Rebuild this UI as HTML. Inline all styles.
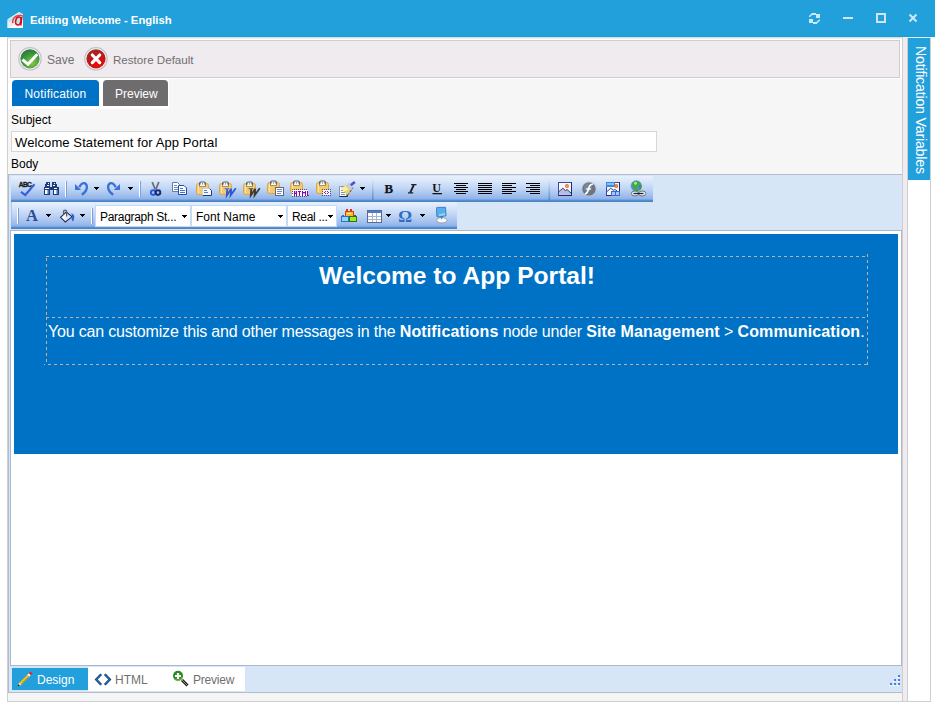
<!DOCTYPE html>
<html><head><meta charset="utf-8">
<style>
*{margin:0;padding:0;box-sizing:border-box}
html,body{width:935px;height:707px;overflow:hidden;background:#fff;font-family:"Liberation Sans",sans-serif;position:relative}
.a{position:absolute}
.t{position:absolute;white-space:nowrap;line-height:1}
.tb{position:absolute;background:linear-gradient(#e6f0fc 0px,#dde9fb 4px,#c2d7f5 12px,#a3c1ee 19px,#90b2e8 23px,#6098da 24px,#4a84c4 25px)}
.sepw{position:absolute;width:1px;background:#fff}
.sepb{position:absolute;width:1px;background:#7b9fe0}
.dd{position:absolute;width:0;height:0;border-left:3px solid transparent;border-right:3px solid transparent;border-top:3px solid #000}
.sel{position:absolute;background:#fff;font-size:12px;line-height:1;white-space:nowrap}
#para b{letter-spacing:0.14px}
</style></head><body>

<!-- title bar -->
<div class="a" style="left:0;top:0;width:935px;height:37px;background:#22a0dc"></div>
<div class="a" style="left:0;top:36px;width:935px;height:1px;background:#139fe0"></div>
<div class="t" id="ttl" style="left:30px;top:15px;font-size:11.3px;font-weight:bold;color:#fff">Editing Welcome - English</div>

<!-- outer container -->
<div class="a" style="left:7px;top:37px;width:896px;height:665px;background:#f6f6f6;border:1px solid #cfcfcf;border-top-color:#e0dad6"></div>
<div class="a" style="left:8px;top:38px;width:894px;height:41px;background:#fff;border-top:1px solid #f3f1ef"></div>
<!-- top toolbar -->
<div class="a" style="left:10px;top:40px;width:890px;height:38px;background:#efebee;border:1px solid #cdcdcd"></div>
<div class="t" id="save" style="left:47px;top:54px;font-size:12px;color:#707070">Save</div>
<div class="t" id="restore" style="left:113px;top:54px;font-size:11.6px;color:#707070">Restore Default</div>

<!-- tabs -->
<div class="a" style="left:8px;top:78px;width:161px;height:31px;background:#fff"></div>
<div class="a" style="left:12px;top:80px;width:87px;height:26px;background:#0072c6;border-radius:4px 4px 0 0"></div>
<div class="a" style="left:103px;top:80px;width:65px;height:26px;background:#6f6c6e;border-radius:4px 4px 0 0"></div>
<div class="t" id="tnot" style="left:24.5px;top:88px;font-size:12px;letter-spacing:0.2px;color:#fff">Notification</div>
<div class="t" id="tprev" style="left:115px;top:88px;font-size:12px;color:#fff">Preview</div>

<div class="t" id="subj" style="left:11px;top:114px;font-size:12px;color:#000">Subject</div>
<div class="a" style="left:11px;top:131px;width:646px;height:21px;background:#fff;border:1px solid #d6d6d6"></div>
<div class="t" id="subjv" style="left:15px;top:136px;font-size:13px;letter-spacing:0.1px;color:#000">Welcome Statement for App Portal</div>
<div class="t" id="body" style="left:11px;top:158px;font-size:12px;color:#000">Body</div>

<!-- editor wrapper -->
<div class="a" style="left:8px;top:174px;width:895px;height:519px;background:#d6e6f6;border:1px solid #b1bccd;border-right:none"></div>
<!-- toolbar 1 -->
<div class="tb" style="left:11px;top:176px;width:642px;height:26px"></div>
<!-- toolbar 2 -->
<div class="tb" style="left:11px;top:202px;width:446px;height:27px;background:linear-gradient(#e6f0fc 0px,#dde9fb 4px,#c2d7f5 12px,#a3c1ee 20px,#90b2e8 24px,#6098da 25px,#4a84c4 26px)"></div>


<div class="a" style="left:95px;top:205px;width:242px;height:22px;background:#c4dafa"></div>
<div class="sel" style="left:96px;top:206px;width:94px;height:20px"></div>
<div class="sel" style="left:192px;top:206px;width:94px;height:20px"></div>
<div class="sel" style="left:288px;top:206px;width:48px;height:20px"></div>
<div class="t" id="ps" style="left:100px;top:211px;font-size:12px;letter-spacing:-0.3px;color:#000">Paragraph St...</div>
<div class="t" id="fn" style="left:196px;top:211px;font-size:12px;color:#000">Font Name</div>
<div class="t" id="rl" style="left:292px;top:211px;font-size:12px;letter-spacing:-0.3px;color:#000">Real ...</div>
<!-- editor area -->
<div class="a" style="left:10px;top:230px;width:892px;height:436px;background:#fff;border:1px solid #a9b8cc"></div>
<div class="a" style="left:14px;top:234px;width:884px;height:220px;background:#0072c6"></div>


<div class="t" id="h1" style="left:319px;top:264px;font-size:24.6px;font-weight:bold;color:#fff">Welcome to App Portal!</div>
<div class="t" id="para" style="left:48px;top:324px;font-size:16px;letter-spacing:-0.18px;color:#fff">You can customize this and other messages in the <b>Notifications</b> node under <b>Site Management</b> &gt; <b>Communication</b>.</div>
<!-- bottom bar -->
<div class="a" style="left:8px;top:692px;width:895px;height:1px;background:#b1bccd"></div>
<div class="a" style="left:8px;top:693px;width:894px;height:8px;background:#f5f5f5"></div>
<div class="a" style="left:88px;top:667px;width:157px;height:24px;background:#fff"></div>
<div class="a" style="left:12px;top:668px;width:76px;height:22px;background:#22a0dc"></div>
<div class="t" id="design" style="left:37px;top:674px;font-size:12px;color:#fff">Design</div>
<div class="t" id="html" style="left:115px;top:674px;font-size:12px;color:#707070">HTML</div>
<div class="t" id="bprev" style="left:193px;top:674px;font-size:12px;letter-spacing:-0.2px;color:#707070">Preview</div>

<!-- splitter + right panel -->
<div class="a" style="left:902px;top:37px;width:1px;height:665px;background:#cfcfcf"></div>
<div class="a" style="left:903px;top:37px;width:4px;height:664px;background:#efebee"></div>
<div class="a" style="left:907px;top:37px;width:24px;height:1px;background:#efebee"></div>
<div class="a" style="left:7px;top:701px;width:924px;height:1px;background:#cfcfcf"></div>
<div class="a" style="left:907px;top:38px;width:24px;height:664px;background:#fff;border:1px solid #cfcfcf;border-top:none"></div>
<div class="a" style="left:908px;top:38px;width:22px;height:142px;background:#22a0dc"></div>



<div class="t" id="nv" style="left:913.5px;top:46px;font-size:14.2px;letter-spacing:-0.2px;color:#fff;writing-mode:vertical-rl">Notification Variables</div>
<svg class="a" style="left:0;top:0" width="935" height="707" viewBox="0 0 935 707">
<defs>
<radialGradient id="gG" cx="0.6" cy="0.7" r="0.7"><stop offset="0" stop-color="#8cc84a"/><stop offset="0.6" stop-color="#3e9a3a"/><stop offset="1" stop-color="#2a7a3c"/></radialGradient>
<radialGradient id="gR" cx="0.6" cy="0.75" r="0.7"><stop offset="0" stop-color="#f00a0a"/><stop offset="0.6" stop-color="#c81414"/><stop offset="1" stop-color="#a02828"/></radialGradient>
<linearGradient id="gSep" x1="0" y1="178" x2="0" y2="201" gradientUnits="userSpaceOnUse"><stop offset="0" stop-color="#e4eefa"/><stop offset="0.4" stop-color="#a8c8e8"/><stop offset="1" stop-color="#4886c6"/></linearGradient>
</defs>
<!-- title icon -->
<g>
<path d="M7.5 19.3 L19 12 L23 14.3 L23 28 L7.5 28 Z" fill="#fbfbfb"/>
<path d="M8 19.6 L19 12.7 L22.6 14.8 L22.6 19 L13.5 23.2 L8 21.5 Z" fill="#c4e4f8"/>
<path d="M7.6 21.3 L14.5 25 L7.6 27.5 Z" fill="#ececec"/>
<path d="M14.5 25 L22.8 22" stroke="#e0e0e0" stroke-width="0.8"/>
<path d="M12.6 23.2 Q12.4 16.2 19.2 15.4 Q22 15.2 23 16.5" fill="none" stroke="#f23a3a" stroke-width="1.4"/>
<ellipse cx="18.3" cy="21" rx="2.6" ry="4" transform="rotate(12 18.3 21)" fill="#bfe0f6" stroke="#dc0c0c" stroke-width="1.5"/>
<path d="M21.8 17.2 L20.8 25.5" stroke="#d40808" stroke-width="1.5"/>
</g>
<!-- window buttons -->
<g fill="#cfe7f6" shape-rendering="crispEdges">
<rect x="816" y="14" width="4" height="4"/>
<rect x="812" y="13" width="4" height="2"/>
<rect x="809" y="19" width="4" height="4"/>
<rect x="813" y="22" width="4" height="2"/>
<rect x="843" y="17" width="10" height="2"/>
<path d="M876 13h10v10h-10z M878 15v6h6v-6z" fill-rule="evenodd"/>
</g>
<g stroke="#cfe7f6" fill="none">
<path d="M809.3 16.7 L812.5 13.5" stroke-width="1.6"/>
<path d="M816.5 23 L819.8 19.8" stroke-width="1.6"/>
<path d="M909.5 14.5 L916.5 21.5 M916.5 14.5 L909.5 21.5" stroke-width="2"/>
</g>
<!-- save icon -->
<circle cx="30" cy="58.8" r="11.2" fill="#f4f2f4" stroke="#c4c0c6" stroke-width="1.2"/>
<circle cx="30" cy="58.8" r="9.6" fill="url(#gG)"/>
<path d="M23.5 60.5 L28 64.3 L36.3 55.3" fill="none" stroke="#fff" stroke-width="3" stroke-linecap="square"/>
<!-- restore icon -->
<circle cx="96" cy="58.8" r="11.2" fill="#f4f2f4" stroke="#c4c0c6" stroke-width="1.2"/>
<circle cx="96" cy="58.8" r="9.6" fill="url(#gR)"/>
<path d="M92.3 55 L99.7 62.6 M99.7 55 L92.3 62.6" fill="none" stroke="#fff" stroke-width="3.2" stroke-linecap="round"/>


<!-- dashed table -->
<g stroke="#c0b0a6" stroke-width="1" stroke-dasharray="3 3" fill="none">
<line x1="46" y1="256.5" x2="868" y2="256.5"/>
<line x1="46" y1="317.5" x2="866" y2="317.5"/>
<line x1="46.5" y1="258" x2="46.5" y2="315"/>
<line x1="46.5" y1="317" x2="46.5" y2="362"/>
<line x1="867.5" y1="254" x2="867.5" y2="365"/>
<line x1="44" y1="364.5" x2="868" y2="364.5" stroke-dashoffset="2"/>
</g>
<!-- pencil -->
<path d="M20 684 L28.6 675.4" stroke="#f4c020" stroke-width="2.7"/>
<path d="M21 684.4 L29 676.4" stroke="#d88800" stroke-width="1"/>
<path d="M28.4 675.6 L29.9 674.1" stroke="#fff" stroke-width="2.7"/>
<path d="M29.7 674.3 L31.6 672.4" stroke="#e82828" stroke-width="2.7"/>
<path d="M18.6 685.4 L20.4 683.6" stroke="#fce4b8" stroke-width="2.5"/>
<circle cx="18.7" cy="685.3" r="0.9" fill="#2a1400"/>
<!-- <> -->
<path d="M101.2 674.3 L96.2 679.5 L101.2 684.7" fill="none" stroke="#0c3470" stroke-width="2.3"/>
<path d="M101.2 674.3 L96.2 679.5 L101.2 684.7" fill="none" stroke="#2a98e8" stroke-width="0.9"/>
<path d="M104.8 674.3 L109.8 679.5 L104.8 684.7" fill="none" stroke="#0c3470" stroke-width="2.3"/>
<path d="M104.8 674.3 L109.8 679.5 L104.8 684.7" fill="none" stroke="#2a98e8" stroke-width="0.9"/>
<!-- magnifier -->
<path d="M182 680 L187.5 685.5" stroke="#202020" stroke-width="3"/>
<path d="M182 680 L187 685" stroke="#909090" stroke-width="1"/>
<circle cx="178" cy="675.8" r="5" fill="#2a8a2a"/>
<path d="M174.5 679 A5 5 0 0 0 182.5 677" fill="none" stroke="#70b830" stroke-width="1.5"/>
<path d="M175 676h6M178 673v6" stroke="#fff" stroke-width="2.2"/>
<!-- resize grip -->
<g fill="#4a7ee0">
<rect x="898" y="675" width="2" height="2"/>
<rect x="894" y="679" width="2" height="2"/><rect x="898" y="679" width="2" height="2"/>
<rect x="890" y="683" width="2" height="2"/><rect x="894" y="683" width="2" height="2"/><rect x="898" y="683" width="2" height="2"/>
</g>
<g fill="#fff">
<rect x="897" y="677" width="2" height="1"/>
<rect x="893" y="681" width="2" height="1"/><rect x="897" y="681" width="2" height="1"/>
<rect x="889" y="685" width="2" height="1"/><rect x="893" y="685" width="2" height="1"/><rect x="897" y="685" width="2" height="1"/>
</g>
<!-- ============ TOOLBAR 1 ICONS ============ -->
<g id="tb1">
<!-- spell ABC -->
<text x="18.8" y="187" font-family="Liberation Sans" font-weight="bold" font-size="6.6" fill="#1a1a1a" stroke="#1a1a1a" stroke-width="0.35" letter-spacing="-0.6">ABC</text>
<path d="M21 191.8 L25.3 195 L34.5 184.3" fill="none" stroke="#3a5ed8" stroke-width="2.1"/>
<!-- binoculars -->
<g fill="#1c3a7c" shape-rendering="crispEdges">
<rect x="46" y="182" width="4" height="5"/><rect x="45" y="184" width="1" height="3"/>
<rect x="44" y="187" width="6" height="8"/>
<rect x="52" y="182" width="4" height="5"/><rect x="56" y="184" width="1" height="3"/>
<rect x="53" y="187" width="6" height="8"/>
<rect x="50" y="187" width="3" height="3"/>
</g>
<g fill="#fff" shape-rendering="crispEdges">
<rect x="48" y="183" width="1" height="1"/><rect x="54" y="183" width="1" height="1"/>
<rect x="47" y="185" width="2" height="1"/><rect x="53" y="185" width="2" height="1"/>
<rect x="45" y="188" width="4" height="1"/><rect x="54" y="188" width="3" height="1"/>
<rect x="45" y="190" width="2" height="4"/><rect x="54" y="190" width="2" height="4"/>
</g>
<g fill="#9aa8dc" shape-rendering="crispEdges"><rect x="47" y="190" width="1" height="4"/><rect x="56" y="190" width="1" height="4"/></g>
<g fill="#5a6ab8" shape-rendering="crispEdges"><rect x="48" y="190" width="1" height="4"/><rect x="57" y="190" width="1" height="4"/></g>
<!-- separator -->
<rect x="65" y="181" width="1" height="16" fill="#fff"/><rect x="66" y="181" width="1" height="16" fill="#7b9fe0"/>
<!-- undo -->
<path d="M79.3 187.3 Q81.3 182.8 84.6 183.2 Q87.3 184.2 86.8 188.2 Q86 192 81.8 194.8" fill="none" stroke="#3a70d8" stroke-width="2.3"/>
<path d="M75 184 L75 190 L81.2 190 Z" fill="#3a70d8"/>
<path d="M94 187h5v1h-1v1h-1v1h-1v-1h-1v-1h-1z" fill="#000"/>
<!-- redo -->
<path d="M115.7 187.3 Q113.7 182.8 110.4 183.2 Q107.7 184.2 108.2 188.2 Q109 192 113.2 194.8" fill="none" stroke="#3a70d8" stroke-width="2.3"/>
<path d="M120 184 L120 190 L113.8 190 Z" fill="#3a70d8"/>
<path d="M128 187h5v1h-1v1h-1v1h-1v-1h-1v-1h-1z" fill="#000"/>
<!-- separator -->
<rect x="139" y="181" width="1" height="16" fill="#fff"/><rect x="140" y="181" width="1" height="16" fill="#7b9fe0"/>
<!-- cut -->
<path d="M152.2 182 L155.2 189.5 M158.8 182 L155.8 189.5" stroke="#6a7078" stroke-width="1.8"/>
<circle cx="153.2" cy="192.6" r="2.3" fill="none" stroke="#2a5ae0" stroke-width="2"/>
<circle cx="158" cy="192.6" r="2.3" fill="none" stroke="#1a2a78" stroke-width="2"/>
<!-- copy -->
<path d="M172.5 182.5h5l2 2v7h-7z" fill="#fff" stroke="#6a7a9a"/>
<path d="M174 185.5h3M174 187.5h4M174 189.5h4" stroke="#5a8ae0"/>
<path d="M178.5 185.5h5.5l2.5 2.5v6.5h-8z" fill="#fff" stroke="#2a48a8"/>
<path d="M180 188.5h3M180 190.5h5M180 192.5h5" stroke="#3a72e0"/>
<!-- paste -->
<g id="clip">
<rect x="196.5" y="183.5" width="12" height="11" rx="2" fill="#f6c96a" stroke="#dca650"/>
<rect x="198" y="185" width="1" height="8" fill="#fde6a8"/>
<path d="M199 186.5 V183.5 Q199 181.5 201 181.5 H204 Q206 181.5 206 183.5 V186.5 Z" fill="#585e64"/>
<path d="M199.8 186 H205.2 V184.6 H204.4 V182.6 H200.6 V184.6 H199.8 Z" fill="#f6f6f2"/>
<circle cx="202.5" cy="183.8" r="0.6" fill="#6a5a3a"/>
</g>
<path d="M202.5 188.5h7l2 2v5h-9z" fill="#f8f8fc" stroke="#24406a"/>
<path d="M202.5 195.5v-7h7" fill="none" stroke="#c8d4e8"/>
<path d="M204 190.5h3M204 192.5h4" stroke="#4a80d8"/>
<!-- paste word -->
<g transform="translate(23,0)">
<rect x="196.5" y="183.5" width="12" height="11" rx="2" fill="#f6c96a" stroke="#dca650"/>
<rect x="198" y="185" width="1" height="8" fill="#fde6a8"/>
<path d="M199 186.5 V183.5 Q199 181.5 201 181.5 H204 Q206 181.5 206 183.5 V186.5 Z" fill="#585e64"/>
<path d="M199.8 186 H205.2 V184.6 H204.4 V182.6 H200.6 V184.6 H199.8 Z" fill="#f6f6f2"/>
<circle cx="202.5" cy="183.8" r="0.6" fill="#6a5a3a"/>
</g>
<path d="M227.2 188.6 L226.8 195.4 L231.2 188.8 L230.6 195.4 L235.8 188.2" fill="none" stroke="#2c58d8" stroke-width="1.8"/>
<path d="M224.6 188.7h4.6" stroke="#5a80e0" stroke-width="1.3"/>
<!-- paste word strip -->
<g transform="translate(47,0)">
<rect x="196.5" y="183.5" width="12" height="11" rx="2" fill="#f6c96a" stroke="#dca650"/>
<rect x="198" y="185" width="1" height="8" fill="#fde6a8"/>
<path d="M199 186.5 V183.5 Q199 181.5 201 181.5 H204 Q206 181.5 206 183.5 V186.5 Z" fill="#585e64"/>
<path d="M199.8 186 H205.2 V184.6 H204.4 V182.6 H200.6 V184.6 H199.8 Z" fill="#f6f6f2"/>
<circle cx="202.5" cy="183.8" r="0.6" fill="#6a5a3a"/>
</g>
<path d="M251.2 188.6 L250.8 195.4 L255.2 188.8 L254.6 195.4 L259.8 188.2" fill="none" stroke="#3a3a3a" stroke-width="1.8"/>
<path d="M248.6 188.7h4.6" stroke="#6a6a6a" stroke-width="1.3"/>
<!-- paste plain -->
<g transform="translate(71,-1)">
<rect x="196.5" y="183.5" width="12" height="11" rx="2" fill="#f6c96a" stroke="#dca650"/>
<rect x="198" y="185" width="1" height="8" fill="#fde6a8"/>
<path d="M199 186.5 V183.5 Q199 181.5 201 181.5 H204 Q206 181.5 206 183.5 V186.5 Z" fill="#585e64"/>
<path d="M199.8 186 H205.2 V184.6 H204.4 V182.6 H200.6 V184.6 H199.8 Z" fill="#f6f6f2"/>
<circle cx="202.5" cy="183.8" r="0.6" fill="#6a5a3a"/>
</g>
<rect x="275.5" y="187.5" width="8" height="8" fill="#fff" stroke="#5a6a7a"/>
<path d="M277 189.5h5M277 191.5h5M277 193.5h4" stroke="#6a88c0"/>
<!-- paste html -->
<g transform="translate(94,-1)">
<rect x="196.5" y="183.5" width="12" height="11" rx="2" fill="#f6c96a" stroke="#dca650"/>
<rect x="198" y="185" width="1" height="8" fill="#fde6a8"/>
<path d="M199 186.5 V183.5 Q199 181.5 201 181.5 H204 Q206 181.5 206 183.5 V186.5 Z" fill="#585e64"/>
<path d="M199.8 186 H205.2 V184.6 H204.4 V182.6 H200.6 V184.6 H199.8 Z" fill="#f6f6f2"/>
<circle cx="202.5" cy="183.8" r="0.6" fill="#6a5a3a"/>
</g>
<rect x="292" y="190" width="16" height="6" fill="#f4faff"/>
<g fill="#505868"><rect x="292" y="189" width="1" height="1"/><rect x="294" y="189" width="1" height="1"/><rect x="296" y="189" width="1" height="1"/><rect x="298" y="189" width="1" height="1"/><rect x="300" y="189" width="1" height="1"/><rect x="302" y="189" width="1" height="1"/><rect x="304" y="189" width="1" height="1"/><rect x="306" y="189" width="1" height="1"/>
<rect x="292" y="196" width="1" height="1"/><rect x="294" y="196" width="1" height="1"/><rect x="296" y="196" width="1" height="1"/><rect x="298" y="196" width="1" height="1"/><rect x="300" y="196" width="1" height="1"/><rect x="302" y="196" width="1" height="1"/><rect x="304" y="196" width="1" height="1"/><rect x="306" y="196" width="1" height="1"/>
<rect x="292" y="191" width="1" height="1"/><rect x="292" y="193" width="1" height="1"/></g>
<g fill="#8a0a9e" shape-rendering="crispEdges">
<rect x="294" y="191" width="1" height="5"/><rect x="296" y="191" width="1" height="5"/><rect x="295" y="193" width="1" height="1"/>
<rect x="298" y="191" width="3" height="1"/><rect x="299" y="192" width="1" height="4"/>
<rect x="302" y="191" width="1" height="5"/><rect x="305" y="191" width="1" height="5"/><rect x="303" y="192" width="2" height="1"/>
<rect x="307" y="191" width="1" height="5"/><rect x="308" y="195" width="1" height="1"/>
</g>
<g fill="#c070d0" opacity="0.6"><rect x="295" y="191" width="1" height="2"/><rect x="303" y="193" width="2" height="1"/></g>
<!-- paste code -->
<g transform="translate(120,-1)">
<rect x="196.5" y="183.5" width="12" height="11" rx="2" fill="#f6c96a" stroke="#dca650"/>
<rect x="198" y="185" width="1" height="8" fill="#fde6a8"/>
<path d="M199 186.5 V183.5 Q199 181.5 201 181.5 H204 Q206 181.5 206 183.5 V186.5 Z" fill="#585e64"/>
<path d="M199.8 186 H205.2 V184.6 H204.4 V182.6 H200.6 V184.6 H199.8 Z" fill="#f6f6f2"/>
<circle cx="202.5" cy="183.8" r="0.6" fill="#6a5a3a"/>
</g>
<rect x="323" y="190" width="7" height="5" fill="#f4faff"/>
<g fill="#505868"><rect x="322" y="189" width="1" height="1"/><rect x="324" y="189" width="1" height="1"/><rect x="326" y="189" width="1" height="1"/><rect x="328" y="189" width="1" height="1"/><rect x="330" y="189" width="1" height="1"/>
<rect x="322" y="191" width="1" height="1"/><rect x="330" y="191" width="1" height="1"/><rect x="322" y="193" width="1" height="1"/><rect x="330" y="193" width="1" height="1"/>
<rect x="322" y="195" width="1" height="1"/><rect x="324" y="195" width="1" height="1"/><rect x="326" y="195" width="1" height="1"/><rect x="328" y="195" width="1" height="1"/><rect x="330" y="195" width="1" height="1"/></g>
<g fill="#a010b0"><rect x="325" y="191" width="1" height="1"/><rect x="324" y="192" width="1" height="1"/><rect x="325" y="193" width="1" height="1"/>
<rect x="327" y="191" width="1" height="1"/><rect x="328" y="192" width="1" height="1"/><rect x="327" y="193" width="1" height="1"/></g>
<!-- format stripper -->
<path d="M339.5 186.5h7v10h-7z" fill="#fbfbfe" stroke="#8a94a8"/>
<path d="M339.5 196.5h8v-6" fill="none" stroke="#1a2a58"/>
<path d="M341 190.5h4M341 192.5h4M341 194.5h4" stroke="#7a90c0"/>
<path d="M340.8 188.2 L345.8 185.2 L350.8 190.8 L347.6 195.2 Z" fill="#f0d060"/>
<path d="M341.5 188.4 L345.6 186 L348.5 189.5 L343.5 192 Z" fill="#fff4b0" opacity="0.8"/>
<path d="M347.6 195.2 L350.8 190.8" stroke="#202020" stroke-width="1" stroke-dasharray="1 1"/>
<path d="M345.8 185.2 L349.3 182.8 L353.2 187.2 L350.8 190.8 Z" fill="#c8ccd8"/>
<path d="M350.8 190.8 L353.2 187.2" stroke="#303030" stroke-width="1" stroke-dasharray="1 1"/>
<path d="M350.8 185.2 L354.8 182" stroke="#4a50c8" stroke-width="2.6"/>
<path d="M360 187h5v1h-1v1h-1v1h-1v-1h-1v-1h-1z" fill="#000"/>
<!-- group boundary -->
<rect x="372" y="178" width="1.6" height="23" fill="url(#gSep)"/>
<!-- B I U -->
<text x="384.5" y="193.4" font-family="Liberation Serif" font-weight="bold" font-size="12.8" fill="#141414" stroke="#141414" stroke-width="0.25">B</text>
<path d="M413.8 185 L410.2 192.6" stroke="#202020" stroke-width="1.9"/>
<path d="M411.2 184.6h5.3M408 192.9h5.2" stroke="#202020" stroke-width="1.1"/>
<text x="432.3" y="192.2" font-family="Liberation Serif" font-weight="bold" font-size="12" fill="#141414">U</text>
<rect x="432.5" y="193" width="9.5" height="1.3" fill="#141414"/>
<!-- align icons -->
<g fill="#000" shape-rendering="crispEdges">
<rect x="454" y="183" width="14" height="1"/><rect x="456" y="185" width="10" height="1"/><rect x="454" y="187" width="14" height="1"/><rect x="456" y="189" width="10" height="1"/><rect x="454" y="191" width="14" height="1"/><rect x="456" y="193" width="10" height="1"/>
<rect x="478" y="183" width="14" height="1"/><rect x="478" y="185" width="14" height="1"/><rect x="478" y="187" width="14" height="1"/><rect x="478" y="189" width="14" height="1"/><rect x="478" y="191" width="14" height="1"/><rect x="478" y="193" width="14" height="1"/>
<rect x="502" y="183" width="14" height="1"/><rect x="502" y="185" width="10" height="1"/><rect x="502" y="187" width="14" height="1"/><rect x="502" y="189" width="10" height="1"/><rect x="502" y="191" width="14" height="1"/><rect x="502" y="193" width="10" height="1"/>
<rect x="526" y="183" width="14" height="1"/><rect x="530" y="185" width="10" height="1"/><rect x="526" y="187" width="14" height="1"/><rect x="530" y="189" width="10" height="1"/><rect x="526" y="191" width="14" height="1"/><rect x="530" y="193" width="10" height="1"/>
</g>
<rect x="548.5" y="178" width="1.6" height="23" fill="url(#gSep)"/>
<!-- image -->
<rect x="558.5" y="182.5" width="13" height="13" fill="#f6f8fe" stroke="#3a4a98"/>
<path d="M571.5 182.5v13h-13" fill="none" stroke="#1a2a78"/>
<path d="M559 194.8 L559 191.5 L562.8 188.2 L565.5 190.3 L567 189.3 L571 193 L571 195 Z" fill="#b8bce0"/>
<path d="M559 191.5 L562.8 188.2 L565.5 190.6 L567 189.5 L571 193" fill="none" stroke="#2a3050" stroke-width="0.9"/>
<circle cx="567" cy="186" r="1.9" fill="#f06818"/>
<circle cx="567" cy="186" r="0.8" fill="#ffd060"/>
<!-- flash -->
<circle cx="589" cy="189" r="7.6" fill="#b8c0cc"/>
<circle cx="589" cy="189" r="6.6" fill="#6a7688"/>
<circle cx="588" cy="187.5" r="4" fill="#8a96a6" opacity="0.5"/>
<path d="M584.8 194 Q587.5 193.5 588.5 189 Q589.5 184.3 593.2 184" fill="none" stroke="#fff" stroke-width="1.7"/>
<path d="M586.2 189h4.6" stroke="#fff" stroke-width="1.5"/>
<!-- image map -->
<rect x="606.5" y="182.5" width="13" height="13" fill="#f6f8fe" stroke="#3a4a98"/>
<path d="M619.5 182.5v13h-13" fill="none" stroke="#1a2a78"/>
<circle cx="616.3" cy="186" r="1.9" fill="#f06818"/>
<circle cx="616.3" cy="186" r="0.8" fill="#ffc050"/>
<rect x="606" y="182" width="9" height="5" fill="#3a88e0"/>
<rect x="607" y="183" width="7" height="2" fill="#88c0f0"/>
<path d="M607 191.5 L610.8 188.2 L613.3 190.3 L614.8 189.5 L617 190.8" fill="none" stroke="#2a3050" stroke-width="0.9"/>
<rect x="611" y="191" width="9" height="5" fill="#3a68d8"/>
<rect x="612" y="192" width="3" height="3" fill="#a8c8f0"/><rect x="616" y="192" width="3" height="3" fill="#a8c8f0"/>
<!-- link -->
<circle cx="636.3" cy="186" r="5.4" fill="#5a8ae0" stroke="#8a94a8" stroke-width="0.5"/>
<path d="M632 183 Q634.5 180.5 638.5 181.5 L640.8 184 L638 184.5 L636.5 188 L639.5 190.5 L637.5 191.2 L634.2 189 L632.5 186.5 Z" fill="#38b030"/>
<path d="M638.5 185.5 L641.6 184.8 Q642 188.5 640 190 Z" fill="#30a030"/>
<circle cx="635.5" cy="183.3" r="1.5" fill="#c8f0c0" opacity="0.8"/>
<ellipse cx="635" cy="193.5" rx="3.6" ry="2.5" fill="#f4f4f8" stroke="#5a6070" stroke-width="0.9"/>
<ellipse cx="642.2" cy="193.5" rx="3.6" ry="2.5" fill="#f4f4f8" stroke="#5a6070" stroke-width="0.9"/>
<path d="M633.5 193.5h10" stroke="#1a2240" stroke-width="1.3"/>
</g>
<!-- ============ TOOLBAR 2 ICONS ============ -->
<g id="tb2">
<rect x="11" y="202" width="1" height="25" fill="#8ab0e4" opacity="0.5"/>
<rect x="17" y="208" width="1" height="16" fill="#fff"/><rect x="18" y="208" width="1" height="16" fill="#7b9fe0"/>
<text x="26" y="221.3" font-family="Liberation Serif" font-weight="bold" font-size="16.5" fill="#2c4c94">A</text>
<path d="M46 214h5v1h-1v1h-1v1h-1v-1h-1v-1h-1z" fill="#000"/>
<!-- bucket -->
<path d="M60.5 217.3 L66.2 212 L72 216.8 L65.3 222 Z" fill="#f8f8fe" stroke="#1c2c60" stroke-width="1.1"/>
<path d="M66.2 213 L71 216.8 L65.3 221 Z" fill="#d8dcf0" opacity="0.7"/>
<path d="M63.6 214.5 V211.6 Q63.6 210.2 65.1 210.2 Q66.6 210.2 66.6 211.6 V216.5" stroke="#56606c" stroke-width="1.3" fill="none"/>
<path d="M71.3 213.3 Q74.8 214.3 74.2 218 L73.3 221.3 Q71.6 221.3 71.6 219 L72.2 216.5 Z" fill="#2c5ed8"/>
<path d="M80 214h5v1h-1v1h-1v1h-1v-1h-1v-1h-1z" fill="#000"/>
<rect x="91" y="208" width="1" height="16" fill="#fff"/><rect x="92" y="208" width="1" height="16" fill="#7b9fe0"/>
<path d="M182 215h5v1h-1v1h-1v1h-1v-1h-1v-1h-1z" fill="#000"/>
<path d="M278 215h5v1h-1v1h-1v1h-1v-1h-1v-1h-1z" fill="#000"/>
<path d="M328 215h5v1h-1v1h-1v1h-1v-1h-1v-1h-1z" fill="#000"/>
<!-- modules -->
<rect x="346" y="209" width="2" height="2" fill="#d83a10"/><rect x="350" y="209" width="2" height="2" fill="#d83a10"/>
<rect x="345.5" y="211.5" width="8" height="5" fill="#fbb830" stroke="#d04010"/>
<rect x="347" y="213" width="4" height="1" fill="#fde890"/>
<rect x="342" y="215" width="2" height="1" fill="#2a70d0"/><rect x="354" y="215" width="2" height="1" fill="#1a7a20"/>
<rect x="341.5" y="216.5" width="7" height="5" fill="#90d8f8" stroke="#2a70d0"/>
<rect x="349.5" y="216.5" width="7" height="5" fill="#b0e020" stroke="#1a7a20"/>
<!-- table -->
<rect x="367.5" y="210.5" width="14" height="12" fill="#fff" stroke="#5a6a90"/>
<rect x="368" y="211" width="13" height="2" fill="#4a7ad8"/>
<path d="M368 216.5h13M368 219.5h13M372.5 213v9M376.5 213v9" stroke="#a8b4c8" stroke-width="1"/>
<path d="M386 214h5v1h-1v1h-1v1h-1v-1h-1v-1h-1z" fill="#000"/>
<!-- omega -->
<text x="398.3" y="221.6" font-family="Liberation Serif" font-weight="bold" font-size="17.2" fill="#2c6cc4">&#937;</text>
<path d="M420 214h5v1h-1v1h-1v1h-1v-1h-1v-1h-1z" fill="#000"/>
<!-- monitor -->
<ellipse cx="441.8" cy="220.3" rx="5.2" ry="2.7" fill="#f6f8fa" stroke="#8a94a0" stroke-width="0.8"/>
<path d="M440 216 L443.5 216 L441.5 219.5 Z" fill="#5a7a9a"/>
<path d="M436.5 208.3 Q436 207.5 437.5 207.4 L445.5 207.3 L446 215.8 L438 217 Q436.8 217 436.8 216 Z" fill="#56b0ee" stroke="#3a78c0" stroke-width="0.9"/>
<path d="M439 214.5 L445 213 L445 215.3 L439 216 Z" fill="#a0e4fa" opacity="0.8"/>
</g>
</svg>
</body></html>
